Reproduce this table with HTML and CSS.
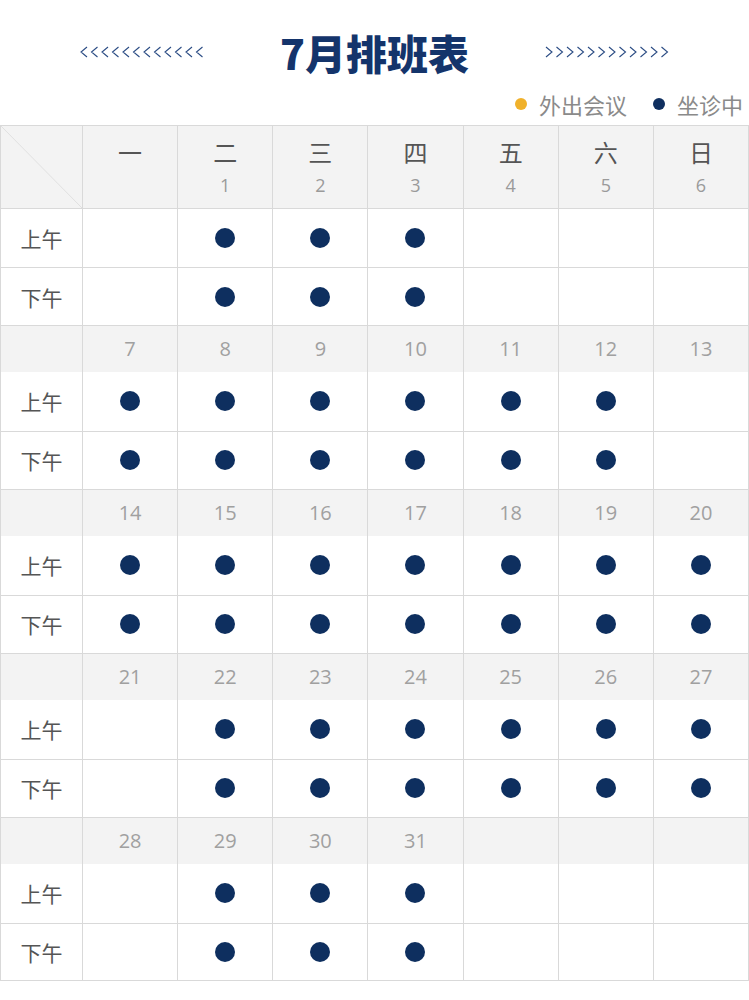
FILE: index.html
```html
<!DOCTYPE html>
<html lang="zh">
<head>
<meta charset="utf-8">
<title>7月排班表</title>
<link rel="stylesheet" href="styles.css">
</head>
<body>
<div class="page">
  <div class="title-bar">
    <svg class="chev" width="125" height="12" viewBox="0 0 125 12">
      <path d="M7 1L1 6L7 11M17.5 1L11.5 6L17.5 11M28 1L22 6L28 11M38.5 1L32.5 6L38.5 11M49 1L43 6L49 11M59.5 1L53.5 6L59.5 11M70 1L64 6L70 11M80.5 1L74.5 6L80.5 11M91 1L85 6L91 11M101.5 1L95.5 6L101.5 11M112 1L106 6L112 11M122.5 1L116.5 6L122.5 11"/>
    </svg>
    <h1 class="title">7月排班表</h1>
    <svg class="chev" width="125" height="12" viewBox="0 0 125 12">
      <path d="M2 1L8 6L2 11M12.5 1L18.5 6L12.5 11M23 1L29 6L23 11M33.5 1L39.5 6L33.5 11M44 1L50 6L44 11M54.5 1L60.5 6L54.5 11M65 1L71 6L65 11M75.5 1L81.5 6L75.5 11M86 1L92 6L86 11M96.5 1L102.5 6L96.5 11M107 1L113 6L107 11M117.5 1L123.5 6L117.5 11"/>
    </svg>
  </div>
  <div class="legend">
    <span class="legend-item"><i class="ldot yellow"></i>外出会议</span>
    <span class="legend-item"><i class="ldot navy"></i>坐诊中</span>
  </div>
  <div class="table">
    <div class="row head">
      <div class="cell corner"><svg width="100%" height="100%" viewBox="0 0 81 82" preserveAspectRatio="none"><line x1="0" y1="0" x2="81" y2="82"/></svg></div>
      <div class="cell"><span class="wd">一</span><span class="hn">&nbsp;</span></div>
      <div class="cell"><span class="wd">二</span><span class="hn">1</span></div>
      <div class="cell"><span class="wd">三</span><span class="hn">2</span></div>
      <div class="cell"><span class="wd">四</span><span class="hn">3</span></div>
      <div class="cell"><span class="wd">五</span><span class="hn">4</span></div>
      <div class="cell"><span class="wd">六</span><span class="hn">5</span></div>
      <div class="cell"><span class="wd">日</span><span class="hn">6</span></div>
    </div>
    <div class="row am">
      <div class="cell label">上午</div>
      <div class="cell"></div>
      <div class="cell"><i class="dot"></i></div>
      <div class="cell"><i class="dot"></i></div>
      <div class="cell"><i class="dot"></i></div>
      <div class="cell"></div><div class="cell"></div><div class="cell"></div>
    </div>
    <div class="row pm">
      <div class="cell label">下午</div>
      <div class="cell"></div>
      <div class="cell"><i class="dot"></i></div>
      <div class="cell"><i class="dot"></i></div>
      <div class="cell"><i class="dot"></i></div>
      <div class="cell"></div><div class="cell"></div><div class="cell"></div>
    </div>

    <div class="row date">
      <div class="cell"></div>
      <div class="cell">7</div><div class="cell">8</div><div class="cell">9</div><div class="cell">10</div><div class="cell">11</div><div class="cell">12</div><div class="cell">13</div>
    </div>
    <div class="row am">
      <div class="cell label">上午</div>
      <div class="cell"><i class="dot"></i></div><div class="cell"><i class="dot"></i></div><div class="cell"><i class="dot"></i></div><div class="cell"><i class="dot"></i></div><div class="cell"><i class="dot"></i></div><div class="cell"><i class="dot"></i></div><div class="cell"></div>
    </div>
    <div class="row pm">
      <div class="cell label">下午</div>
      <div class="cell"><i class="dot"></i></div><div class="cell"><i class="dot"></i></div><div class="cell"><i class="dot"></i></div><div class="cell"><i class="dot"></i></div><div class="cell"><i class="dot"></i></div><div class="cell"><i class="dot"></i></div><div class="cell"></div>
    </div>

    <div class="row date">
      <div class="cell"></div>
      <div class="cell">14</div><div class="cell">15</div><div class="cell">16</div><div class="cell">17</div><div class="cell">18</div><div class="cell">19</div><div class="cell">20</div>
    </div>
    <div class="row am">
      <div class="cell label">上午</div>
      <div class="cell"><i class="dot"></i></div><div class="cell"><i class="dot"></i></div><div class="cell"><i class="dot"></i></div><div class="cell"><i class="dot"></i></div><div class="cell"><i class="dot"></i></div><div class="cell"><i class="dot"></i></div><div class="cell"><i class="dot"></i></div>
    </div>
    <div class="row pm">
      <div class="cell label">下午</div>
      <div class="cell"><i class="dot"></i></div><div class="cell"><i class="dot"></i></div><div class="cell"><i class="dot"></i></div><div class="cell"><i class="dot"></i></div><div class="cell"><i class="dot"></i></div><div class="cell"><i class="dot"></i></div><div class="cell"><i class="dot"></i></div>
    </div>

    <div class="row date">
      <div class="cell"></div>
      <div class="cell">21</div><div class="cell">22</div><div class="cell">23</div><div class="cell">24</div><div class="cell">25</div><div class="cell">26</div><div class="cell">27</div>
    </div>
    <div class="row am">
      <div class="cell label">上午</div>
      <div class="cell"></div><div class="cell"><i class="dot"></i></div><div class="cell"><i class="dot"></i></div><div class="cell"><i class="dot"></i></div><div class="cell"><i class="dot"></i></div><div class="cell"><i class="dot"></i></div><div class="cell"><i class="dot"></i></div>
    </div>
    <div class="row pm">
      <div class="cell label">下午</div>
      <div class="cell"></div><div class="cell"><i class="dot"></i></div><div class="cell"><i class="dot"></i></div><div class="cell"><i class="dot"></i></div><div class="cell"><i class="dot"></i></div><div class="cell"><i class="dot"></i></div><div class="cell"><i class="dot"></i></div>
    </div>

    <div class="row date">
      <div class="cell"></div>
      <div class="cell">28</div><div class="cell">29</div><div class="cell">30</div><div class="cell">31</div><div class="cell"></div><div class="cell"></div><div class="cell"></div>
    </div>
    <div class="row am">
      <div class="cell label">上午</div>
      <div class="cell"></div><div class="cell"><i class="dot"></i></div><div class="cell"><i class="dot"></i></div><div class="cell"><i class="dot"></i></div><div class="cell"></div><div class="cell"></div><div class="cell"></div>
    </div>
    <div class="row pm">
      <div class="cell label">下午</div>
      <div class="cell"></div><div class="cell"><i class="dot"></i></div><div class="cell"><i class="dot"></i></div><div class="cell"><i class="dot"></i></div><div class="cell"></div><div class="cell"></div><div class="cell"></div>
    </div>
  </div>
</div>
</body>
</html>
```

FILE: styles.css
```css
* { box-sizing: border-box; }
html, body { margin: 0; padding: 0; background: #fff; }
body {
  font-family: "Open Sans", "Noto Sans CJK SC", sans-serif;
  width: 749px;
}
.page { width: 749px; }

.title-bar {
  display: flex;
  justify-content: center;
  align-items: center;
  gap: 75px;
  height: 60px;
  margin-top: 22px;
}
.chev path {
  fill: none;
  stroke: #2b4c84;
  stroke-width: 1.1;
}
.title {
  margin: 0;
  font-family: "Noto Sans CJK SC", sans-serif;
  font-weight: 900;
  font-size: 41px;
  line-height: 1;
  color: #14346b;
}

.legend {
  height: 43px;
  display: flex;
  justify-content: flex-end;
  align-items: center;
  gap: 26px;
  padding-right: 6px;
}
.legend-item {
  display: flex;
  align-items: center;
  gap: 12px;
  font-family: "Noto Sans CJK SC", sans-serif;
  font-size: 22px;
  color: #8a8a8a;
}
.ldot {
  display: block;
  width: 12px;
  height: 12px;
  border-radius: 50%;
}
.ldot.yellow { background: #f0b12b; }
.ldot.navy { background: #0f2f5f; }

.table {
  width: 749px;
  border-top: 1px solid #d9d9d9;
  border-left: 1px solid #d9d9d9;
}
.row {
  display: grid;
  grid-template-columns: 82px repeat(7, 1fr);
}
.cell {
  border-right: 1px solid #d9d9d9;
  display: flex;
  align-items: center;
  justify-content: center;
}
.row.head { height: 82px; background: #f3f3f3; }
.row.head .cell {
  flex-direction: column;
  justify-content: flex-start;
  padding-top: 11px;
}
.wd {
  font-family: "Noto Sans CJK SC", sans-serif;
  font-size: 24px;
  line-height: 30px;
  color: #555;
}
.hn {
  font-size: 18px;
  line-height: 24px;
  margin-top: 6px;
  color: #9a9a9a;
}
.corner { padding: 0 !important; }
.corner svg { display: block; }
.corner line { stroke: #e0e0e0; stroke-width: 1; }

.row.am, .row.pm { border-top: 1px solid #d9d9d9; }
.row.am { height: 59px; }
.row.pm { height: 58px; }
.row.date {
  height: 46.5px;
  border-top: 1px solid #d9d9d9;
  background: #f3f3f3;
  font-size: 20px;
  color: #a0a0a0;
}
.row.date + .row.am { border-top: none; height: 59px; }
.row.date + .row.am + .row.pm { height: 58.5px; }
.row.pm:last-child { border-bottom: 1px solid #d9d9d9; }
.label {
  font-family: "Noto Sans CJK SC", sans-serif;
  font-size: 21px;
  color: #555;
}
.dot {
  display: block;
  width: 20px;
  height: 20px;
  border-radius: 50%;
  background: #0e2f5f;
}
```
